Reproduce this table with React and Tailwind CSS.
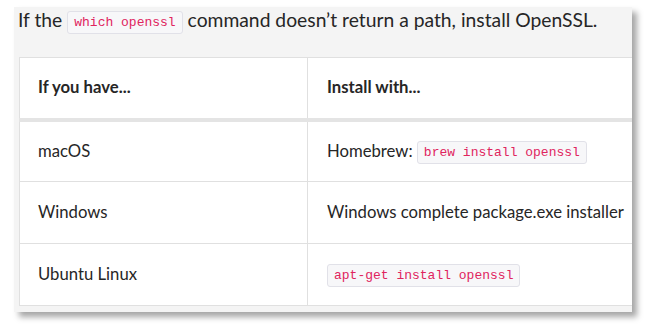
import React from "react";

const rows = [
  { os: "macOS", how: ["Homebrew: ", "brew install openssl"] },
  { os: "Windows", how: ["Windows complete package.exe installer", null] },
  { os: "Ubuntu Linux", how: [null, "apt-get install openssl"] },
];

function Code({ children }) {
  return (
    <code className="inline-block rounded-[3px] border border-[#e1e1e8] bg-[#f7f7f9] px-[6px] leading-[21px] text-[13px] text-[#e0245e] font-['Liberation_Mono',monospace] align-middle">
      {children}
    </code>
  );
}

export default function App() {
  return (
    <div className="w-[649px] h-[330px] bg-white pt-[7px] pl-[14px] font-['Lato',sans-serif] text-[#262626]">
      <div className="w-[618px] h-[305px] bg-[#f4f4f4] overflow-hidden shadow-[5px_5px_6px_rgba(0,0,0,0.35)]">
        <p className="h-[25px] pl-[4px] pt-px text-[19.3px] leading-[24px] whitespace-nowrap">
          If the <Code>which openssl</Code> command doesn’t return a path, install OpenSSL.
        </p>

        <table className="ml-[5px] mt-[25px] w-[640px] border-collapse bg-white text-[16.7px] text-left">
          <thead>
            <tr className="h-[62px] border-b-[4px] border-[#e4e4e4]">
              <th className="w-[288px] border border-[#e0e0e0] pl-[18px] font-bold">If you have...</th>
              <th className="border border-[#e0e0e0] pl-[19px] font-bold">Install with...</th>
            </tr>
          </thead>
          <tbody>
            {rows.map((r) => (
              <tr key={r.os} className="h-[62px]">
                <td className="border border-[#e0e0e0] pl-[18px]">{r.os}</td>
                <td className="border border-[#e0e0e0] pl-[19px] whitespace-nowrap">
                  {r.how[0]}
                  {r.how[1] && <Code>{r.how[1]}</Code>}
                </td>
              </tr>
            ))}
          </tbody>
        </table>
      </div>
    </div>
  );
}
